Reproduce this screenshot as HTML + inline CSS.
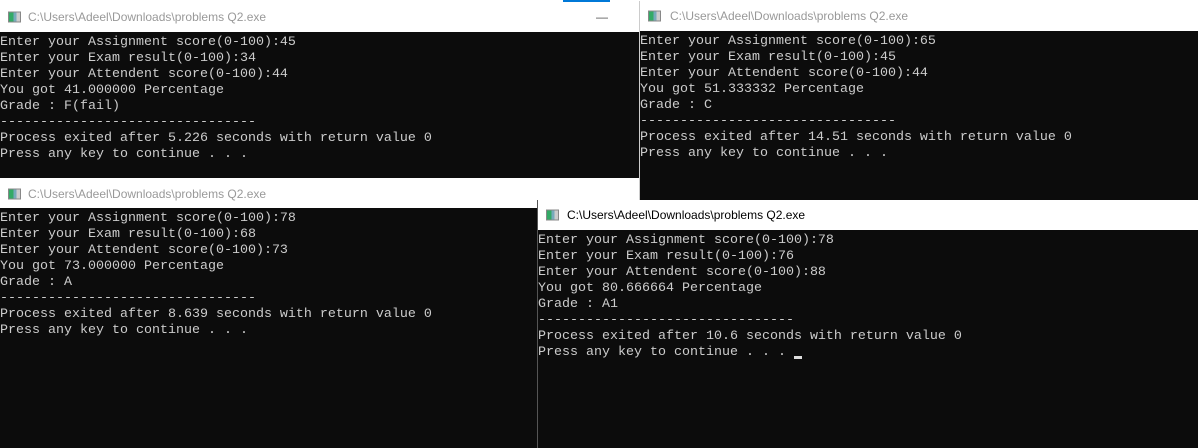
<!DOCTYPE html>
<html><head><meta charset="utf-8"><style>
*{margin:0;padding:0;box-sizing:border-box}
body{width:1198px;height:448px;background:#fff;position:relative;overflow:hidden}
.w{position:absolute;background:#0c0c0c}
.t{position:absolute;left:0;right:0;top:0;background:#fff;font:12px "Liberation Sans",sans-serif;color:#999;white-space:nowrap}
.t span{position:absolute;top:50%;transform:translateY(-50%)}
.ic{position:absolute;width:13px;height:11px;border:1px solid #888;background:linear-gradient(90deg,#3a6 0 40%,#7ab 40% 70%,#ccc 70%);top:50%;transform:translateY(-50%)}
pre{position:absolute;left:0;font:13.33px/16px "Liberation Mono",monospace;color:#ccc}
</style></head><body>
<div style="position:absolute;left:563px;top:0;width:47px;height:2px;background:#0078d7"></div>
<div class="w" style="left:0;top:2px;width:639px;height:176px">
 <div class="t" style="height:30px"><div class="ic" style="left:8px"></div><span style="left:28px">C:\Users\Adeel\Downloads\problems Q2.exe</span><span style="left:596px;color:#555">—</span></div>
 <pre style="top:33px">Enter your Assignment score(0-100):45
Enter your Exam result(0-100):34
Enter your Attendent score(0-100):44
You got 41.000000 Percentage
Grade : F(fail)
--------------------------------
Process exited after 5.226 seconds with return value 0
Press any key to continue . . .</pre>
</div>
<div class="w" style="left:639px;top:1px;width:559px;height:210px;border-left:1px solid #ccc">
 <div class="t" style="height:30px"><div class="ic" style="left:8px"></div><span style="left:30px">C:\Users\Adeel\Downloads\problems Q2.exe</span></div>
 <pre style="top:33px">Enter your Assignment score(0-100):65
Enter your Exam result(0-100):45
Enter your Attendent score(0-100):44
You got 51.333332 Percentage
Grade : C
--------------------------------
Process exited after 14.51 seconds with return value 0
Press any key to continue . . .</pre>
</div>
<div class="w" style="left:0;top:179px;width:639px;height:269px">
 <div class="t" style="height:29px"><div class="ic" style="left:8px"></div><span style="left:28px">C:\Users\Adeel\Downloads\problems Q2.exe</span></div>
 <pre style="top:32px">Enter your Assignment score(0-100):78
Enter your Exam result(0-100):68
Enter your Attendent score(0-100):73
You got 73.000000 Percentage
Grade : A
--------------------------------
Process exited after 8.639 seconds with return value 0
Press any key to continue . . .</pre>
</div>
<div class="w" style="left:537px;top:200px;width:661px;height:248px;border-left:1px solid #555">
 <div class="t" style="height:30px;color:#000"><div class="ic" style="left:8px"></div><span style="left:29px">C:\Users\Adeel\Downloads\problems Q2.exe</span></div>
 <pre style="top:33px">Enter your Assignment score(0-100):78
Enter your Exam result(0-100):76
Enter your Attendent score(0-100):88
You got 80.666664 Percentage
Grade : A1
--------------------------------
Process exited after 10.6 seconds with return value 0
Press any key to continue . . .</pre>
 <div style="position:absolute;left:256px;top:156px;width:8px;height:3px;background:#ddd"></div>
</div>
</body></html>
